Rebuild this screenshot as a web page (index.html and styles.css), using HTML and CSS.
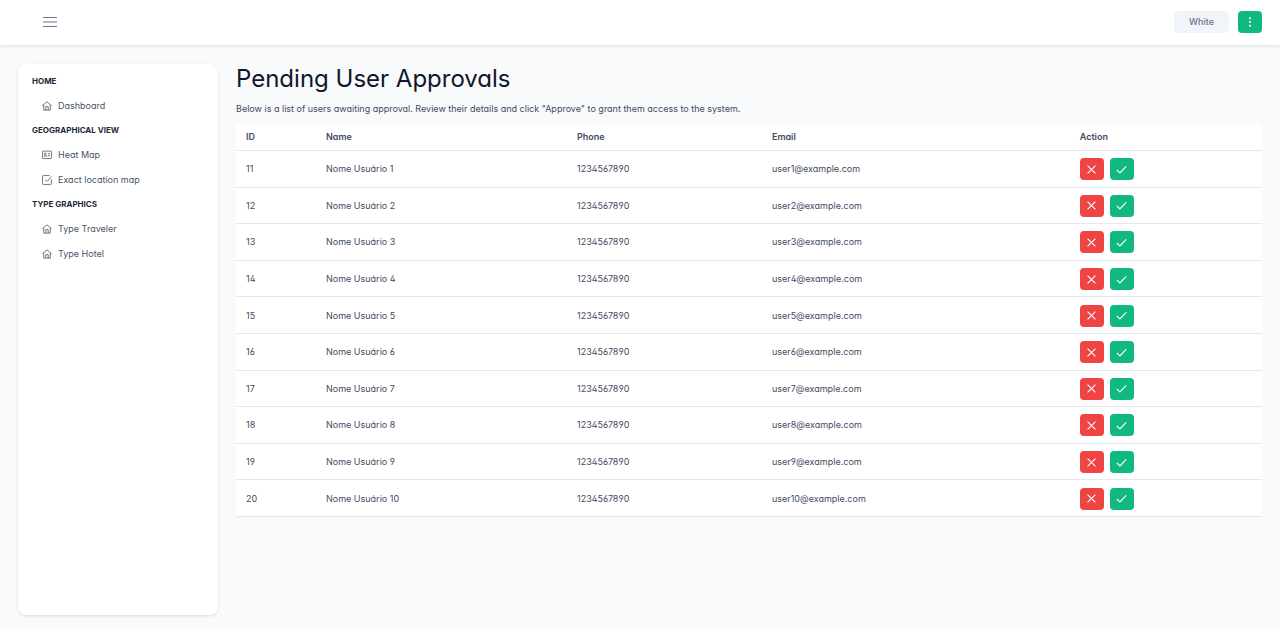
FILE: index.html
```html
<!DOCTYPE html>
<html lang="en">
<head>
<meta charset="utf-8">
<meta name="viewport" content="width=device-width, initial-scale=1">
<title>Pending User Approvals</title>
<link rel="stylesheet" href="styles.css">
</head>
<body>
<svg class="sprite" aria-hidden="true">
  <symbol id="home" viewBox="0 0 14 14"><path d="M.6 6.6 7 1.2l6.4 5.4M2.4 5.4v7.4h9.2V5.4M5.3 12.6V7.8h3.4v4.8"/></symbol>
  <symbol id="card" viewBox="0 0 14 14"><rect x=".6" y="1.6" width="12.8" height="10.4" rx="1"/><circle cx="4.6" cy="5.4" r="1.2"/><path d="M2.6 9.8V9q0-1 1-1h2q1 0 1 1v.8M8.4 5.2h2.8M8.4 7.8h2.8"/></symbol>
  <symbol id="check-square" viewBox="0 0 14 14"><path d="M13.2 6.2V12q0 1.2-1.2 1.2H2Q.8 13.2.8 12V2Q.8.8 2 .8h8.6M4 6.2l3 3L13.2 2"/></symbol>
  <symbol id="times" viewBox="0 0 14 14"><path d="m2 2 10 10M12 2 2 12"/></symbol>
  <symbol id="check" viewBox="0 0 14 14"><path d="m1 7.4 4 4L13 3"/></symbol>
</svg>
<header class="topbar">
  <button class="menu-button" type="button" aria-label="Toggle menu">
    <svg viewBox="0 0 14 14"><path d="M0 2.5h14M0 7h14M0 11.5h14"/></svg>
  </button>
  <div class="topbar-actions">
    <button class="theme-button" type="button">White</button>
    <button class="button success" type="button" aria-label="More options">
      <svg class="dots" viewBox="0 0 10 10"><circle cx="5" cy="1.2" r="1"/><circle cx="5" cy="5" r="1"/><circle cx="5" cy="8.8" r="1"/></svg>
    </button>
  </div>
</header>
<div class="layout">
  <nav class="sidebar" aria-label="Main">
    <h2 class="menu-title">Home</h2>
    <ul class="menu">
      <li><a class="menu-link" href="#dashboard"><svg class="menu-icon"><use href="#home"/></svg>Dashboard</a></li>
    </ul>
    <h2 class="menu-title">Geographical View</h2>
    <ul class="menu">
      <li><a class="menu-link" href="#heat-map"><svg class="menu-icon"><use href="#card"/></svg>Heat Map</a></li>
      <li><a class="menu-link" href="#location"><svg class="menu-icon"><use href="#check-square"/></svg>Exact location map</a></li>
    </ul>
    <h2 class="menu-title">Type Graphics</h2>
    <ul class="menu">
      <li><a class="menu-link" href="#traveler"><svg class="menu-icon"><use href="#home"/></svg>Type Traveler</a></li>
      <li><a class="menu-link" href="#hotel"><svg class="menu-icon"><use href="#home"/></svg>Type Hotel</a></li>
    </ul>
  </nav>
  <main class="content">
    <h1 class="title">Pending User Approvals</h1>
    <p class="intro">Below is a list of users awaiting approval. Review their details and click "Approve" to grant them access to the system.</p>
    <table class="users">
      <thead><tr><th class="col-id">ID</th><th class="col-name">Name</th><th class="col-phone">Phone</th><th class="col-email">Email</th><th>Action</th></tr></thead>
      <tbody id="rows"></tbody>
    </table>
  </main>
</div>
<script src="script.js"></script>
</body>
</html>
```
FILE: script.js
```js
const rows = document.getElementById("rows");
for (let n = 1; n <= 10; n++) {
  const row = document.createElement("tr");
  row.innerHTML = `<td>${n + 10}</td><td>Nome Usuário ${n}</td><td>1234567890</td><td>user${n}@example.com</td>
    <td class="action-cell"><div class="actions">
      <button class="button danger" type="button" aria-label="Reject Nome Usuário ${n}"><svg class="action-icon"><use href="#times"/></svg></button>
      <button class="button success" type="button" aria-label="Approve Nome Usuário ${n}"><svg class="action-icon"><use href="#check"/></svg></button>
    </div></td>`;
  rows.append(row);
}
```
FILE: styles.css
```css
* { box-sizing: border-box; }
body {
  margin: 0;
  min-height: 100vh;
  display: flex;
  flex-direction: column;
  background: #f8fafc;
  color: #3f4b5f;
  font: 400 9px/14px Inter, "Liberation Sans", sans-serif;
  font-feature-settings: "cv02", "cv03", "cv04", "cv11";
}
button { font: inherit; font-feature-settings: inherit; border: 0; cursor: pointer; }
svg { display: block; fill: none; stroke: currentColor; }
.sprite { position: absolute; width: 0; height: 0; }
.topbar {
  display: flex;
  align-items: center;
  justify-content: space-between;
  padding: 11px 18px 12px 38px;
  background: #fff;
  box-shadow: 0 1px 3px rgba(15, 23, 42, 0.12);
}
.menu-button { padding: 4px 5px; background: none; color: #64748b; }
.menu-button svg { width: 14px; height: 14px; stroke-width: 1.2; }
.topbar-actions { display: flex; gap: 9px; }
.theme-button {
  padding: 4px 15px;
  border-radius: 4px;
  background: #f1f5f9;
  color: #64748b;
  font-weight: 500;
}
.button {
  display: flex;
  align-items: center;
  justify-content: center;
  width: 24px;
  height: 22px;
  padding: 0;
  border-radius: 4px;
  color: #fff;
}
.success { background: #10b981; }
.danger { background: #ef4444; }
.dots { width: 10px; height: 10px; fill: currentColor; stroke: none; }
.action-icon { width: 11px; height: 11px; stroke-width: 1.4; }
.layout { flex: 1; display: flex; gap: 18px; padding: 19px 18px 16px; }
.sidebar {
  flex: none;
  width: 200px;
  padding: 10px 14px;
  border-radius: 8px;
  background: #fff;
  box-shadow: 0 1px 3px rgba(15, 23, 42, 0.12);
}
.menu-title {
  margin: 0 0 5px;
  color: #1e293b;
  font-size: 8px;
  line-height: 14px;
  font-weight: 700;
  text-transform: uppercase;
}
.menu { margin: 0 0 5px; padding: 0; list-style: none; }
.menu-link {
  display: flex;
  align-items: center;
  gap: 6px;
  height: 25px;
  padding-left: 10px;
  color: #475569;
  text-decoration: none;
}
.menu-icon { width: 10px; height: 10px; stroke-width: 1.1; }
.content { flex: 1; min-width: 0; }
.title {
  margin: 0 0 9px;
  color: #0f172a;
  font-size: 24px;
  line-height: 29px;
  font-weight: 400;
  font-variation-settings: "opsz" 32;
}
.intro { margin: 0 0 8px; }
.users { width: 100%; height: 393px; border-collapse: collapse; background: #fff; text-align: left; }
.users th, .users td { padding: 6px 10px; border-bottom: 1px solid #e2e8f0; }
.users th { height: 26px; font-weight: 600; }
.users td { padding-bottom: 5px; }
.col-id { width: 80px; }
.col-name { width: 251px; }
.col-phone { width: 19%; }
.col-email { width: 30%; }
.actions { display: flex; gap: 6px; }
```
